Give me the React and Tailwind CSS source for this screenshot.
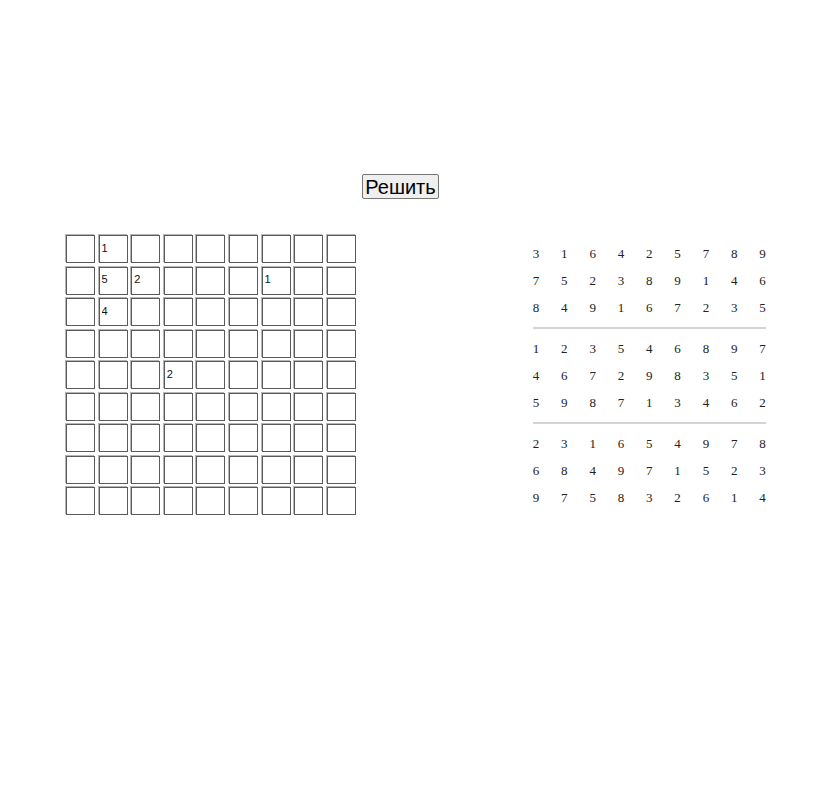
import React from "react";

const given = {
  "0-1": "1",
  "1-1": "5",
  "1-2": "2",
  "1-6": "1",
  "2-1": "4",
  "4-3": "2",
};

const solution = [
  [3, 1, 6, 4, 2, 5, 7, 8, 9],
  [7, 5, 2, 3, 8, 9, 1, 4, 6],
  [8, 4, 9, 1, 6, 7, 2, 3, 5],
  [1, 2, 3, 5, 4, 6, 8, 9, 7],
  [4, 6, 7, 2, 9, 8, 3, 5, 1],
  [5, 9, 8, 7, 1, 3, 4, 6, 2],
  [2, 3, 1, 6, 5, 4, 9, 7, 8],
  [6, 8, 4, 9, 7, 1, 5, 2, 3],
  [9, 7, 5, 8, 3, 2, 6, 1, 4],
];

export default function App() {
  const cells = [];
  for (let r = 0; r < 9; r++) {
    for (let c = 0; c < 9; c++) {
      const v = given[`${r}-${c}`] || "";
      cells.push(
        <input
          key={`${r}-${c}`}
          defaultValue={v}
          className="w-[29px] h-[28px] border border-[#5a5a5a] shadow-[-1px_-1px_0_#b5b5b5] bg-white px-[2px] pb-[3px] text-[11px] text-[#111] outline-none [font-family:'Liberation_Sans',Arial,sans-serif]"
        />
      );
    }
  }

  const groups = [solution.slice(0, 3), solution.slice(3, 6), solution.slice(6, 9)];

  return (
    <div className="w-full h-[791px] bg-white">
      <div className="pt-[174px] pr-[34px] flex justify-center">
        <button className="h-[25px] w-[77px] px-0 text-[20px] leading-[20px] text-black bg-[#efefef] border border-[#767676] rounded-[2px] [font-family:'Liberation_Sans',Arial,sans-serif]">
          Решить
        </button>
      </div>
      <div className="mt-[36px] flex items-start">
        <div className="ml-[66px] grid grid-cols-[repeat(9,29px)] gap-x-[3.6px] gap-y-[3.5px]">
          {cells}
        </div>
        <div className="ml-[177px] pt-[5px] w-[233px] text-[13px] text-[#222] [font-family:'Liberation_Serif','Times_New_Roman',serif]">
          {groups.map((g, gi) => (
            <div key={gi}>
              {gi > 0 && <div className="my-[6px] h-[2px] bg-[#d4d4d4]" />}
              {g.map((row, ri) => (
                <div key={ri} className="flex justify-between h-[27px] leading-[27px]">
                  {row.map((n, ci) => (
                    <span key={ci}>{n}</span>
                  ))}
                </div>
              ))}
            </div>
          ))}
        </div>
      </div>
    </div>
  );
}
